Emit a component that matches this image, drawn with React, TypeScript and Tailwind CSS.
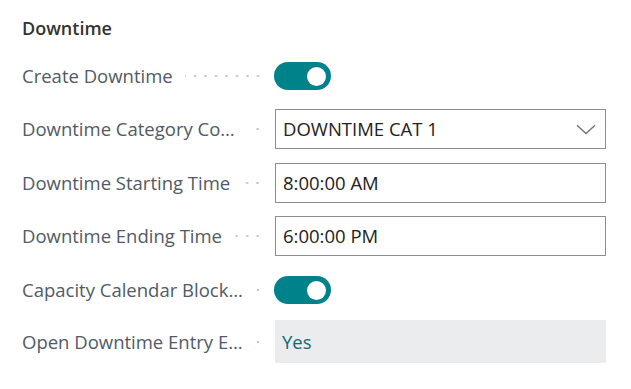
import React from "react";

const font = { fontFamily: '"Open Sans", "Noto Sans", sans-serif' };

function Label({ text, maxW, dotMl }: { text: string; maxW: string; dotMl: string }) {
  return (
    <div className="flex w-[246px] items-center">
      <span className={"truncate whitespace-nowrap text-[18.5px] text-[#515a66] " + maxW}>{text}</span>
      <span
        className={
          "h-[4px] min-w-[14px] flex-1 bg-[radial-gradient(circle,#c4c4c8_0.9px,transparent_1.4px)] bg-[length:10.5px_4px] bg-[position:right_center] bg-repeat-x bg-origin-content bg-clip-content pr-[5px] " +
          dotMl
        }
      />
    </div>
  );
}

function Toggle() {
  return (
    <div className="flex h-[28px] w-[57px] items-center justify-end rounded-full bg-[#00828a] pr-[5px]">
      <div className="h-[19px] w-[19px] rounded-full bg-white" />
    </div>
  );
}

function Row({
  label,
  children,
  className,
  maxW = "max-w-[217px]",
  dotMl = "ml-[12px]",
}: {
  label: string;
  children: React.ReactNode;
  className?: string;
  maxW?: string;
  dotMl?: string;
}) {
  return (
    <div className={"flex items-center " + (className ?? "")}>
      <Label text={label} maxW={maxW} dotMl={dotMl} />
      <div className="ml-[7px] flex w-[331px] items-center">{children}</div>
    </div>
  );
}

export default function App() {
  return (
    <div className="h-[389px] w-[631px] bg-white pl-[22px] pt-[17px]" style={font}>
      <div className="text-[18px] font-semibold leading-[22px] text-[#333333]">Downtime</div>
      <Row label="Create Downtime" className="mt-[23px] h-[28px]">
        <div className="-ml-[1px]">
          <Toggle />
        </div>
      </Row>
      <Row label="Downtime Category Code" className="mt-[19px] h-[40px]">
        <div className="flex h-[40px] w-full items-center justify-between border border-[#8c8c92] pl-[7px] pr-[9px]">
          <span className="text-[18.5px] text-[#222222]">DOWNTIME CAT 1</span>
          <svg width="20" height="11" viewBox="0 0 20 11" fill="none">
            <path d="M1 1.2 L10 9.6 L19 1.2" stroke="#6a6f85" strokeWidth="1.3" />
          </svg>
        </div>
      </Row>
      <Row label="Downtime Starting Time" className="mt-[14px] h-[40px]">
        <div className="flex h-[40px] w-full items-center border border-[#8c8c92] pl-[7px]">
          <span className="text-[18.5px] text-[#222222]">8:00:00 AM</span>
        </div>
      </Row>
      <Row label="Downtime Ending Time" className="mt-[13px] h-[40px]">
        <div className="flex h-[40px] w-full items-center border border-[#8c8c92] pl-[7px]">
          <span className="text-[18.5px] text-[#222222]">6:00:00 PM</span>
        </div>
      </Row>
      <Row
        label="Capacity Calendar Blocked"
        className="mt-[20px] h-[28px]"
        maxW="max-w-[228px]"
        dotMl="ml-[4px]"
      >
        <div className="-ml-[1px]">
          <Toggle />
        </div>
      </Row>
      <Row
        label="Open Downtime Entry Editable"
        className="mt-[16px] h-[43px]"
        maxW="max-w-[228px]"
        dotMl="ml-[4px]"
      >
        <div className="flex h-[43px] w-full items-center bg-[#ebecee] pl-[7px]">
          <span className="text-[18.5px] text-[#0f6a76]">Yes</span>
        </div>
      </Row>
    </div>
  );
}
